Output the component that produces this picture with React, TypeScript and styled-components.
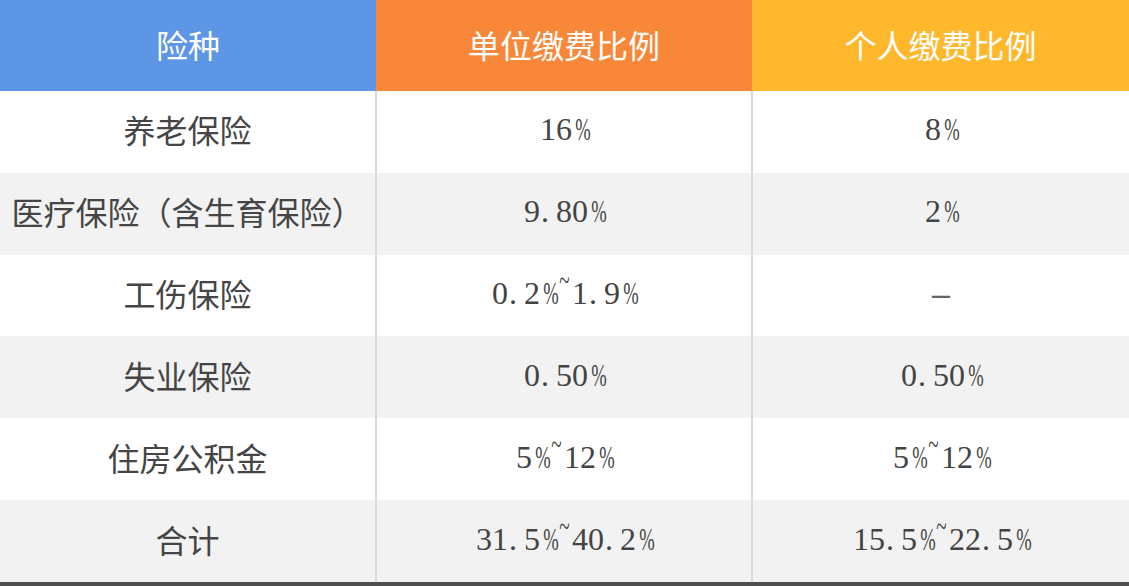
import React from "react";
import styled, { createGlobalStyle, css } from "styled-components";

const Global = createGlobalStyle`
  html, body { margin: 0; padding: 0; background: #ffffff; }
  body { font-family: "Liberation Serif", "Noto Sans CJK SC", serif; }
`;

const Table = styled.div`
  width: 1129px;
  display: grid;
  grid-template-columns: 376px 376px 377px;
  grid-template-rows: 91px repeat(6, 81.83px);
  border-bottom: 4px solid #505050;
`;

const HeadCell = styled.div<{ $bg: string }>`
  background: ${(p) => p.$bg};
  color: #ffffff;
  display: flex;
  align-items: center;
  justify-content: center;
  padding-bottom: 4px;
  box-sizing: border-box;
  font-family: "Noto Sans CJK SC", sans-serif;
  font-size: 32px;
  line-height: 1;
`;

const Cell = styled.div<{ $col: number; $alt: boolean }>`
  background: ${(p) => (p.$alt ? "#f2f2f2" : "#ffffff")};
  color: #444444;
  display: flex;
  align-items: center;
  justify-content: center;
  padding-bottom: 5px;
  box-sizing: border-box;
  font-size: 32px;
  line-height: 1;
  white-space: nowrap;
  ${(p) => p.$col < 2 && css`border-right: 1px solid #d9d9d9;`}
  ${(p) => p.$col > 0 && css`border-left: 1px solid #d9d9d9;`}
`;

const CjkText = styled.span`
  font-family: "Noto Sans CJK SC", sans-serif;
  font-size: 32px;
  color: #454545;
`;

const NumText = styled.span`
  display: inline-flex;
  font-family: "Liberation Serif", serif;
  font-size: 32px;
  color: #444444;
`;

const Glyph = styled.span<{ $kind: "digit" | "dot" | "pct" | "tilde" | "dash" }>`
  display: inline-block;
  width: 0.5em;
  text-align: center;
  overflow: visible;
  ${(p) => p.$kind === "dot" && css`text-align: left; padding-left: 1px; box-sizing: border-box;`}
  ${(p) => p.$kind === "pct" && css`transform: scaleX(0.58); letter-spacing: -0.33em; text-indent: 0;`}
  ${(p) => p.$kind === "tilde" && css`transform: translateY(-0.4em) scaleX(0.6); letter-spacing: -0.04em;`}
  ${(p) => p.$kind === "dash" && css`transform: scaleX(2.2); color: #666;`}
`;

const kindOf = (c: string): "digit" | "dot" | "pct" | "tilde" | "dash" => {
  if (c === ".") return "dot";
  if (c === "%") return "pct";
  if (c === "~") return "tilde";
  if (c === "-") return "dash";
  return "digit";
};

const Num: React.FC<{ text: string }> = ({ text }) => (
  <NumText>
    {text.split("").map((c, i) => (
      <Glyph key={i} $kind={kindOf(c)}>
        {c}
      </Glyph>
    ))}
  </NumText>
);

const rows: [string, string, string][] = [
  ["养老保险", "16%", "8%"],
  ["医疗保险（含生育保险）", "9.80%", "2%"],
  ["工伤保险", "0.2%~1.9%", "-"],
  ["失业保险", "0.50%", "0.50%"],
  ["住房公积金", "5%~12%", "5%~12%"],
  ["合计", "31.5%~40.2%", "15.5%~22.5%"],
];

export default function App() {
  return (
    <>
      <Global />
      <Table>
        <HeadCell $bg="#5e96e6">险种</HeadCell>
        <HeadCell $bg="#f88739">单位缴费比例</HeadCell>
        <HeadCell $bg="#ffb82c">个人缴费比例</HeadCell>
        {rows.map((r, i) => (
          <React.Fragment key={i}>
            <Cell $col={0} $alt={i % 2 === 1}>
              <CjkText>{r[0]}</CjkText>
            </Cell>
            <Cell $col={1} $alt={i % 2 === 1}>
              <Num text={r[1]} />
            </Cell>
            <Cell $col={2} $alt={i % 2 === 1}>
              <Num text={r[2]} />
            </Cell>
          </React.Fragment>
        ))}
      </Table>
    </>
  );
}
